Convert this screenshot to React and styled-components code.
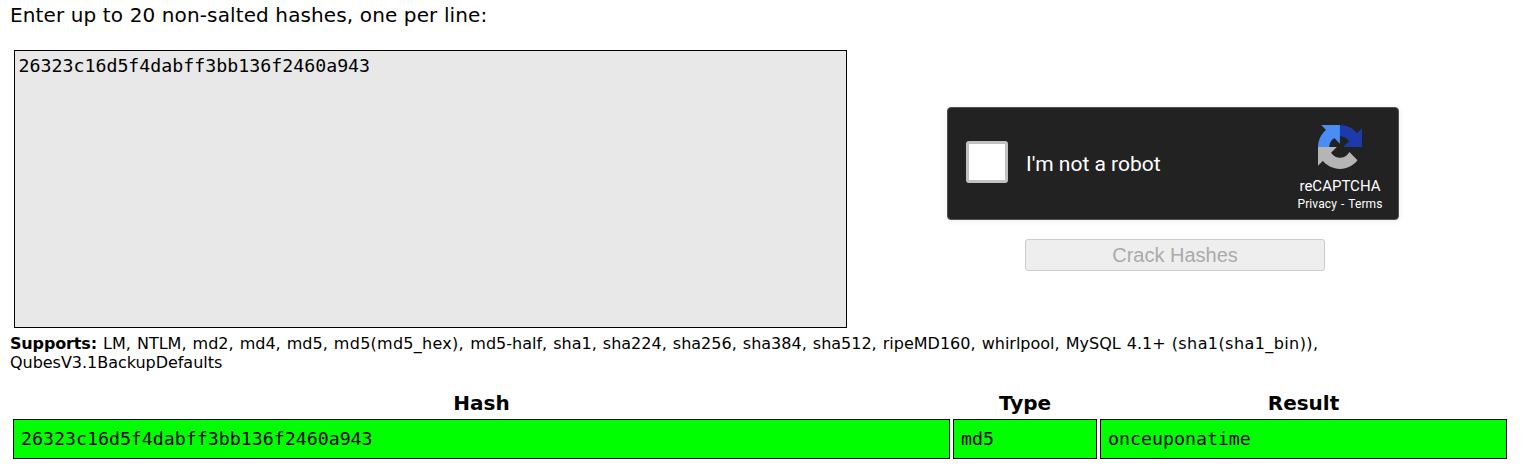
import React from "react";
import styled, { createGlobalStyle } from "styled-components";

const GlobalStyle = createGlobalStyle`
  * { box-sizing: border-box; }
  body {
    margin: 0;
    background: #fff;
    color: #000;
    font-family: Verdana, "DejaVu Sans", sans-serif;
  }
`;

const Page = styled.main`
  width: 1530px;
  height: 475px;
  padding: 3px 20px 0 10px;
  overflow: hidden;
`;

const Prompt = styled.p`
  margin: 0;
  font-size: 20px;
  line-height: 24px;
  letter-spacing: 0.12px;
`;

const Form = styled.form`
  display: flex;
  margin: 23px 0 0 4px;
`;

const HashInput = styled.textarea`
  display: block;
  width: 833px;
  height: 278px;
  margin: 0;
  padding: 3px 3px 3px 3.5px;
  border: 1px solid #000;
  border-radius: 0;
  outline: none;
  resize: none;
  background: #e8e8e8;
  color: #000;
  font: 18.25px/24px "DejaVu Sans Mono", monospace;
`;

const Side = styled.div`
  display: flex;
  flex-direction: column;
  margin: 57px 0 0 100px;
  width: 452px;
`;

const Captcha = styled.div`
  display: flex;
  align-items: center;
  height: 113px;
  padding: 0 14px 0 18px;
  border: 1px solid #525252;
  border-radius: 4px;
  background: #222;
  box-shadow: 0 1px 6px rgba(0, 0, 0, 0.08);
  color: #fff;
  font-family: Roboto, sans-serif;
`;

const CheckBox = styled.span`
  width: 42px;
  height: 42px;
  margin-top: -3px;
  border: 3px solid #c1c1c1;
  border-radius: 3px;
  background: #fff;
`;

const CaptchaLabel = styled.span`
  margin-left: 18px;
  font-size: 21px;
  line-height: 26px;
`;

const Brand = styled.div`
  display: flex;
  flex-direction: column;
  align-items: center;
  align-self: flex-start;
  width: 88px;
  margin: 17px 0 0 auto;
`;

const Logo = styled.svg`
  display: block;
  width: 44px;
  height: 44px;
`;

const BrandName = styled.span`
  margin-top: 8px;
  font-size: 15px;
  line-height: 18px;
`;

const BrandLinks = styled.span`
  font-size: 12px;
  line-height: 18px;
  letter-spacing: 0.1px;
  word-spacing: 1px;
  white-space: nowrap;
`;

const CrackButton = styled.button`
  width: 300px;
  height: 32px;
  margin: 19px 0 0 78px;
  padding: 0;
  border: 1px solid #ccc;
  border-radius: 3px;
  background: #eee;
  color: #aaa;
  font: 20px/28px "Liberation Sans", Arial, sans-serif;
`;

const Supports = styled.p`
  width: 1400px;
  margin: 6px 0 0;
  font-size: 16px;
  line-height: 19px;
  word-spacing: 1px;
`;

const SupportsTitle = styled.b`
  letter-spacing: -0.15px;
  word-spacing: 0;
`;

const Algorithm = styled.span`
  letter-spacing: ${(p) => p.$tracking || 0}px;
`;

const Results = styled.table`
  width: 1500px;
  margin-top: 16px;
  table-layout: fixed;
  border-collapse: separate;
  border-spacing: 3px;
`;

const Column = styled.col`
  width: ${(p) => p.$width}px;
`;

const HeadCell = styled.th`
  padding: 0;
  font-size: 20px;
  font-weight: bold;
  line-height: 25px;
`;

const Cell = styled.td`
  height: 40px;
  padding: 0 7px;
  border: 1px solid #000;
  background: #0f0;
  font: 18.25px/24px "DejaVu Sans Mono", monospace;
`;

function RecaptchaLogo() {
  return (
    <Logo viewBox="0 0 64 64" aria-hidden="true">
      <path fill="#1c3aa9" d="M64 31.955l-.033-1.37V4.687l-7.16 7.16C50.948 4.674 42.033.093 32.05.093c-10.4 0-19.622 4.96-25.458 12.64l11.736 11.86a15.55 15.55 0 0 1 4.754-5.334c2.05-1.6 4.952-2.906 8.968-2.906.485 0 .86.057 1.135.163 4.976.393 9.288 3.14 11.828 7.124l-8.307 8.307L64 31.953" />
      <path fill="#4a8df5" d="M31.862.094l-1.37.033H4.594l7.16 7.16C4.58 13.147 0 22.06 0 32.046c0 10.4 4.96 19.622 12.64 25.458L24.5 45.768a15.55 15.55 0 0 1-5.334-4.754c-1.6-2.05-2.906-4.952-2.906-8.968 0-.485.057-.86.163-1.135.393-4.976 3.14-9.288 7.124-11.828l8.307 8.307L31.86.095" />
      <path fill="#b5b5b5" d="M.001 32.045l.033 1.37v25.898l7.16-7.16c5.86 7.173 14.774 11.754 24.76 11.754 10.4 0 19.622-4.96 25.458-12.64l-11.736-11.86a15.55 15.55 0 0 1-4.754 5.334c-2.05 1.6-4.952 2.906-8.968 2.906-.485 0-.86-.057-1.135-.163-4.976-.393-9.288-3.14-11.828-7.124l8.307-8.307c-10.522.04-22.4.066-27.295-.005" />
    </Logo>
  );
}

export default function App() {
  return (
    <Page>
      <GlobalStyle />
      <Prompt>Enter up to 20 non-salted hashes, one per line:</Prompt>
      <Form>
        <HashInput spellCheck={false} defaultValue="26323c16d5f4dabff3bb136f2460a943" />
        <Side>
          <Captcha>
            <CheckBox />
            <CaptchaLabel>I'm not a robot</CaptchaLabel>
            <Brand>
              <RecaptchaLogo />
              <BrandName>reCAPTCHA</BrandName>
              <BrandLinks>Privacy - Terms</BrandLinks>
            </Brand>
          </Captcha>
          <CrackButton type="button" disabled>Crack Hashes</CrackButton>
        </Side>
      </Form>
      <Supports>
        <SupportsTitle>Supports:</SupportsTitle>{" "}
        <Algorithm>LM, NTLM, md2, md4, md5, </Algorithm>
        <Algorithm $tracking={0.27}>md5(md5_hex), </Algorithm>
        <Algorithm>md5-half, sha1, sha224, sha256, sha384, sha512, ripeMD160, whirlpool, MySQL 4.1+ </Algorithm>
        <Algorithm $tracking={0.42}>(sha1(sha1_bin)), </Algorithm>
        <Algorithm $tracking={-0.03}>QubesV3.1BackupDefaults</Algorithm>
      </Supports>
      <Results>
        <colgroup>
          <Column $width={937} />
          <Column $width={144} />
          <Column $width={407} />
        </colgroup>
        <thead>
          <tr>
            <HeadCell>Hash</HeadCell>
            <HeadCell>Type</HeadCell>
            <HeadCell>Result</HeadCell>
          </tr>
        </thead>
        <tbody>
          <tr>
            <Cell>26323c16d5f4dabff3bb136f2460a943</Cell>
            <Cell>md5</Cell>
            <Cell>onceuponatime</Cell>
          </tr>
        </tbody>
      </Results>
    </Page>
  );
}
